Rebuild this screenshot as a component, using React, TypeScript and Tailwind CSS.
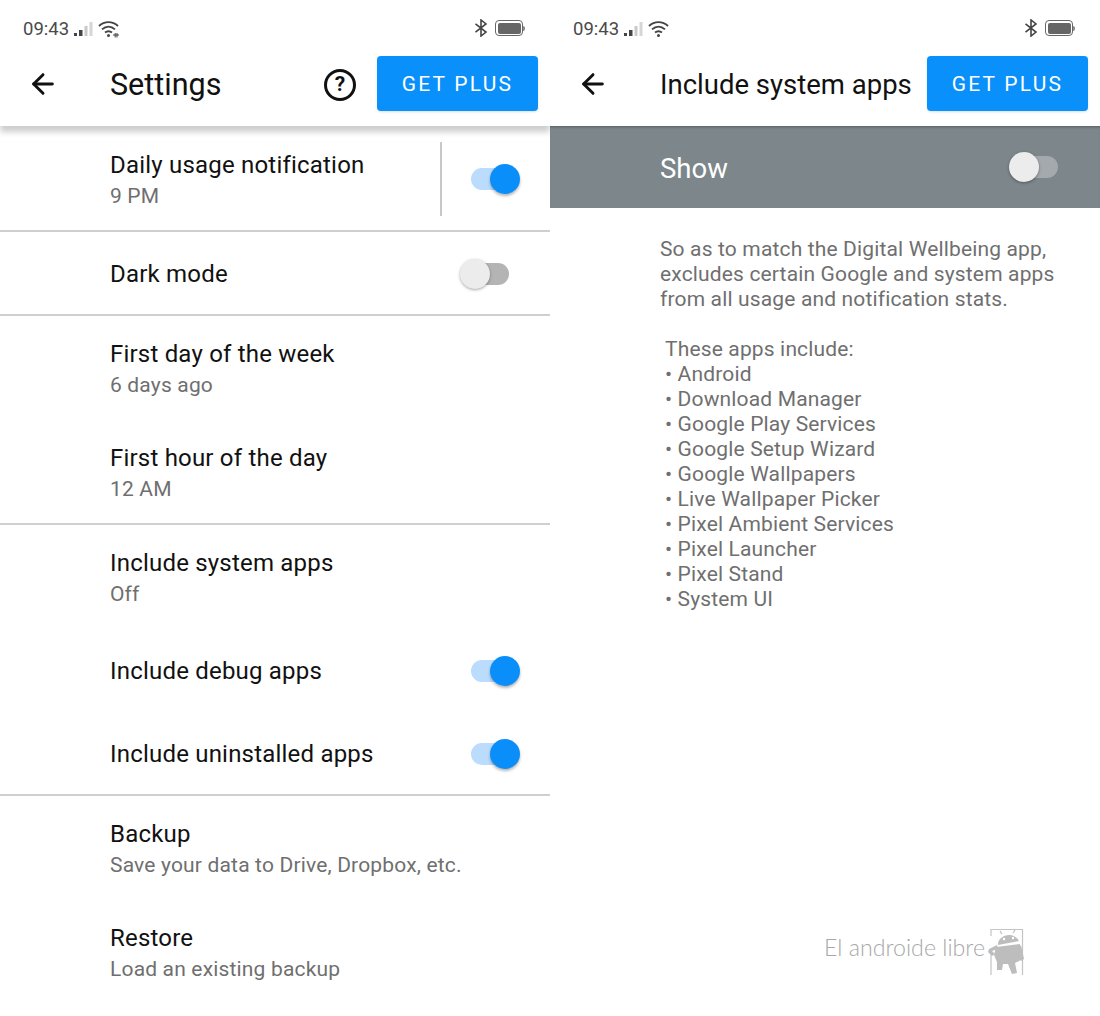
import { ArrowLeft } from 'lucide-react';

function SignalIcon() {
  return (
    <svg width="20" height="16" viewBox="0 0 20 16" className="ml-[5px]">
      <rect x="0" y="12" width="3" height="3" fill="#444" />
      <rect x="5" y="9" width="3.5" height="6" fill="#444" />
      <rect x="10.5" y="5" width="3" height="10" fill="#c9c9c9" />
      <rect x="15.5" y="1" width="3" height="14" fill="#d6d6d6" />
    </svg>
  );
}

function WifiIcon({ plus }: { plus?: boolean }) {
  return (
    <svg width="22" height="18" viewBox="0 0 22 18" className="ml-[4px]" fill="none" stroke="#444" strokeWidth="1.9">
      <path d="M1 6 C6.5 0.8 14.5 0.8 20 6" />
      <path d="M4 9.4 C8 5.8 13 5.8 17 9.4" />
      <path d="M7 12.6 C9.2 10.8 11.8 10.8 14 12.6" />
      <circle cx="10.5" cy="15.4" r="1.5" fill="#444" stroke="none" />
      {plus ? <path d="M15 15 h6 M17.2 13 v4.5 M19 13 v4.5" strokeWidth="1" /> : null}
    </svg>
  );
}

function BluetoothIcon() {
  return (
    <svg width="14" height="18" viewBox="0 0 14 18" fill="none" stroke="#444" strokeWidth="1.6">
      <path d="M1.5 4.8 L12 13 L7 17 V1 L12 5 L1.5 13.2" />
    </svg>
  );
}

function BatteryIcon() {
  return (
    <div className="ml-[7px] flex items-center">
      <div className="h-[16px] w-[28px] rounded-[4px] border border-[#666] p-[1.5px]">
        <div className="h-full w-full rounded-[2px] bg-[#666]" />
      </div>
      <div className="h-[5px] w-[2px] rounded-r-sm bg-[#888]" />
    </div>
  );
}

function StatusBar({ plus }: { plus?: boolean }) {
  return (
    <div className="flex h-[56px] items-start justify-between pl-[23px] pr-[25px] pt-[19px]">
      <div className="flex h-[20px] items-center">
        <span className="text-[18.5px] leading-[20px] text-[#4a4a4a]">09:43</span>
        <SignalIcon />
        <WifiIcon plus={plus} />
      </div>
      <div className="flex h-[18px] items-center">
        <BluetoothIcon />
        <BatteryIcon />
      </div>
    </div>
  );
}

function Toolbar({ title, help }: { title: string; help?: boolean }) {
  return (
    <div className="flex h-[70px] items-start pr-[12px]">
      <div className="flex h-[55px] w-[110px] items-center pl-[27px]">
        <ArrowLeft size={32} strokeWidth={2.2} className="text-[#111]" />
      </div>
      <div className={`flex h-[58px] flex-1 items-center text-[#111] ${help ? 'text-[30.5px]' : 'text-[27.5px]'}`}>
        {title}
      </div>
      {help ? (
        <div className="mr-[21px] flex h-[58px] items-center">
          <div className="flex h-[32px] w-[32px] items-center justify-center rounded-full border-[3px] border-[#111] text-[21px] font-bold text-[#111]">
            ?
          </div>
        </div>
      ) : null}
      <div className="flex h-[55px] w-[161px] items-center justify-center rounded-[4px] bg-[#0a90fb] pt-[2px] text-[21px] tracking-[2.2px] text-white shadow-sm">
        GET PLUS
      </div>
    </div>
  );
}

function Toggle({ on, dim }: { on: boolean; dim?: boolean }) {
  if (on) {
    return (
      <div className="relative h-[22px] w-[49px]">
        <div className="absolute left-0 top-0 h-[22px] w-[40px] rounded-full bg-[#bcdcfd]" />
        <div className="absolute right-0 top-[-4px] h-[30px] w-[30px] rounded-full bg-[#0a8ffa] shadow-[0_2px_3px_rgba(0,0,0,0.3)]" />
      </div>
    );
  }
  return (
    <div className="relative h-[22px] w-[49px]">
      <div className={`absolute right-0 top-0 h-[22px] w-[40px] rounded-full ${dim ? 'bg-[#a3a9ad]' : 'bg-[#b4b4b4]'}`} />
      <div className="absolute left-0 top-[-4px] h-[30px] w-[30px] rounded-full bg-[#ececec] shadow-[0_1px_3px_rgba(0,0,0,0.35)]" />
    </div>
  );
}

function Row({ title, sub, on, divider }: { title: string; sub?: string; on?: boolean; divider?: boolean }) {
  return (
    <div className={`flex items-center pl-[110px] ${sub ? 'h-[104px]' : 'h-[83px]'}`}>
      <div className={`flex-1 ${sub ? 'pt-[4px]' : 'pt-[2px]'}`}>
        <div className="text-[24px] leading-[31px] tracking-[0.2px] text-[#111]">{title}</div>
        {sub ? <div className="text-[21px] leading-[31px] tracking-[0.17px] text-[#6f6f6f]">{sub}</div> : null}
      </div>
      {divider ? <div className="mr-[29px] h-[74px] w-[2px] bg-[#c8c8c8]" /> : null}
      {on !== undefined ? (
        <div className={on ? 'mr-[30px]' : 'mr-[41px]'}>
          <Toggle on={on} />
        </div>
      ) : null}
    </div>
  );
}

function Rule() {
  return <div className="h-[2px] -mt-px bg-[#cfcfcf]" />;
}

function AndroidMark() {
  return (
    <svg width="36" height="48" viewBox="0 0 36 48" className="absolute left-[164px] top-[-2px]">
      <path d="M3 8 V1.5 H34.5 V47 M3 25 V47" fill="none" stroke="#c4c4c4" strokeWidth="1.2" />
      <path d="M10 17 C9 8 25 2 31 13 Z" fill="#bdbdbd" />
      <path d="M14 6 L12 3 M25 5 L27 2" stroke="#bdbdbd" strokeWidth="1.2" />
      <circle cx="16" cy="11" r="1.2" fill="#fff" />
      <circle cx="25" cy="10" r="1.2" fill="#fff" />
      <path d="M8 19 L32 16 L33 32 L27 35 L29 45 L24 46 L20 36 L15 36 L14 42 L9 42 L9 34 L6 27 Z" fill="#bdbdbd" />
      <path d="M9 17 L1 21 L0 24 L4 28 L7 26 L4 23 L10 21 Z" fill="#bdbdbd" />
      <path d="M33 17 L36 31 L33 33 L30 21 Z" fill="#bdbdbd" />
    </svg>
  );
}

const apps = [
  'Android',
  'Download Manager',
  'Google Play Services',
  'Google Setup Wizard',
  'Google Wallpapers',
  'Live Wallpaper Picker',
  'Pixel Ambient Services',
  'Pixel Launcher',
  'Pixel Stand',
  'System UI',
];

export default function App() {
  return (
    <div className="flex h-[1016px] w-[1100px] overflow-hidden bg-white font-['Roboto',sans-serif]">
      <div className="w-[550px] overflow-hidden">
        <StatusBar plus />
        <div className="relative z-10 shadow-[0_6px_6px_rgba(0,0,0,0.2)]">
          <Toolbar title="Settings" help />
        </div>
        <div className="h-px" />
        <Row title="Daily usage notification" sub="9 PM" on divider />
        <Rule />
        <Row title="Dark mode" on={false} />
        <Rule />
        <Row title="First day of the week" sub="6 days ago" />
        <Row title="First hour of the day" sub="12 AM" />
        <Rule />
        <Row title="Include system apps" sub="Off" />
        <Row title="Include debug apps" on />
        <Row title="Include uninstalled apps" on />
        <Rule />
        <Row title="Backup" sub="Save your data to Drive, Dropbox, etc." />
        <Row title="Restore" sub="Load an existing backup" />
      </div>
      <div className="relative w-[550px]">
        <StatusBar />
        <Toolbar title="Include system apps" />
        <div className="flex h-[82px] items-center justify-between bg-[#7c868b] pl-[110px] pr-[42px] shadow-[inset_0_3px_3px_-2px_rgba(0,0,0,0.3)]">
          <span className="pt-[3px] text-[27.5px] text-white">Show</span>
          <Toggle on={false} dim />
        </div>
        <div className="pl-[110px] pr-[30px] pt-[29px] text-[21px] leading-[25px] tracking-[0.15px] text-[#6f6f6f]">
          <p>
            So as to match the Digital Wellbeing app,
            <br />
            excludes certain Google and system apps
            <br />
            from all usage and notification stats.
          </p>
          <div className="mt-[25px] pl-[5px]">
            <div>These apps include:</div>
            {apps.map((app) => (
              <div key={app}>• {app}</div>
            ))}
          </div>
        </div>
        <div className="absolute left-[274px] top-[930px]">
          <span className="font-['Lato',sans-serif] text-[23.2px] font-light text-[#a8a8a8]">El androide libre</span>
          <AndroidMark />
        </div>
      </div>
    </div>
  );
}
